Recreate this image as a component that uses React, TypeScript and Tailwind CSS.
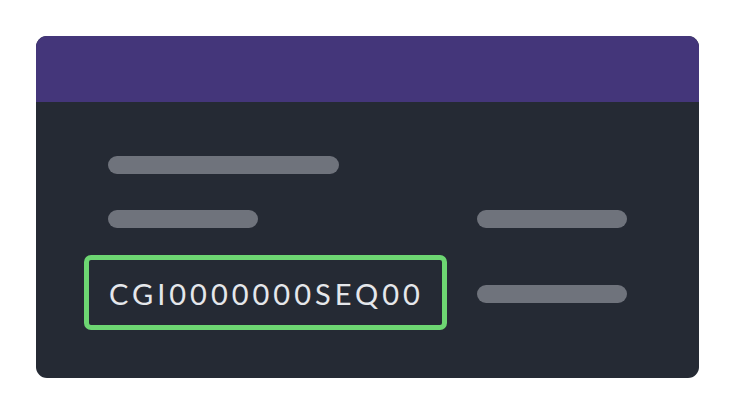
import React from "react";

export default function App() {
  return (
    <div className="w-[735px] h-[414px] bg-white pt-[36px] px-[36px]">
      <div className="h-[342px] rounded-[11px] overflow-hidden bg-[#252a34] flex flex-col">
        <div className="h-[66px] bg-[#44367a]" />
        <div className="pl-[48px] pt-[54px] flex flex-col">
          <div className="flex">
            <div className="ml-[24px] w-[231px] h-[18px] rounded-full bg-[#6f737c]" />
          </div>
          <div className="flex mt-[36px]">
            <div className="w-[363px]">
              <div className="ml-[24px] w-[150px] h-[18px] rounded-full bg-[#6f737c]" />
            </div>
            <div className="ml-[30px] w-[150px] h-[18px] rounded-full bg-[#6f737c]" />
          </div>
          <div className="flex items-center mt-[27px]">
            <div className="w-[363px] h-[75px] border-[5px] border-[#6dd672] rounded-[7px] flex items-center pl-[20px]">
              <span
                className="text-[#e5e7eb] text-[29px] tracking-[4px] font-normal leading-none pt-[2px]"
                style={{ fontFamily: "Lato, 'Noto Sans', sans-serif" }}
              >
                CGI0000000SEQ00
              </span>
            </div>
            <div className="ml-[30px] mt-[3px] w-[150px] h-[18px] rounded-full bg-[#6f737c]" />
          </div>
        </div>
      </div>
    </div>
  );
}
